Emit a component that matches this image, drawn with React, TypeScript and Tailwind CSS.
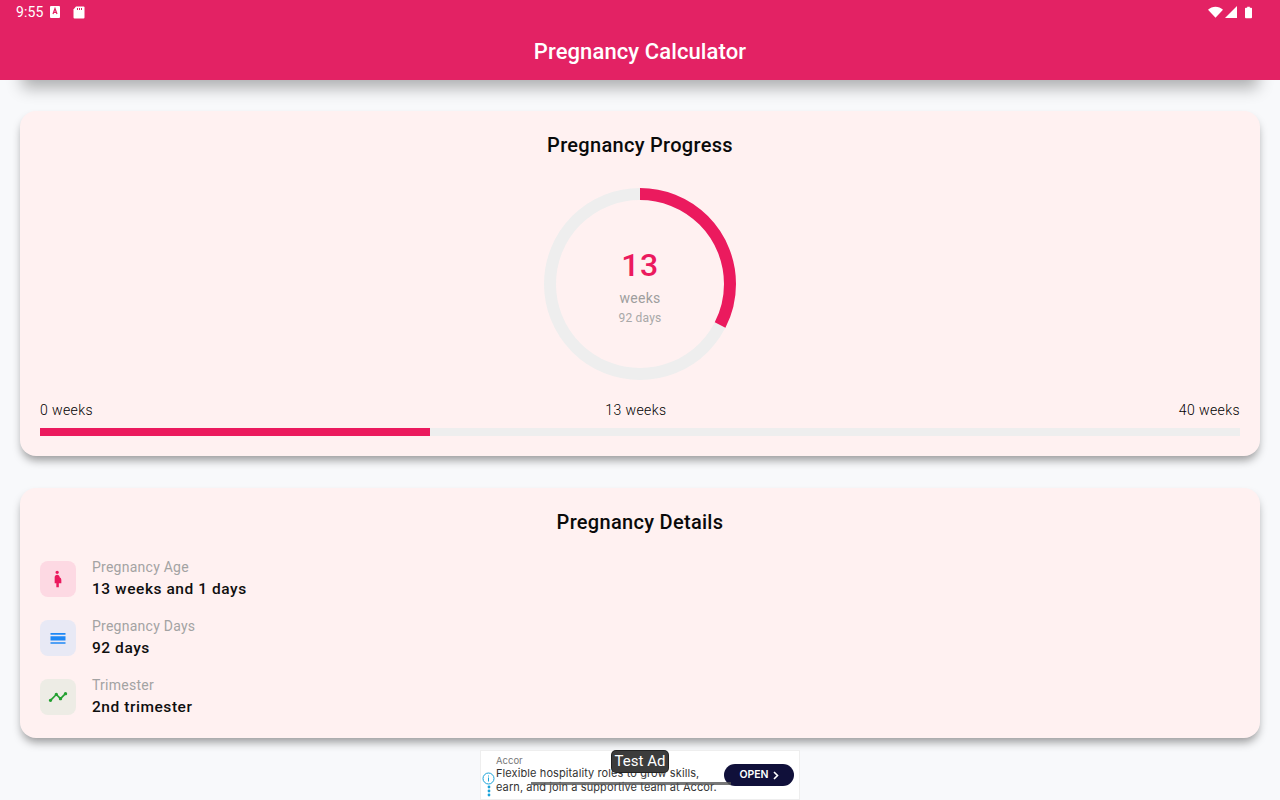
import React from "react";
import { MdPregnantWoman, MdCalendarViewDay, MdTimeline } from "react-icons/md";

function StatusBar() {
  return (
    <div className="flex h-6 items-center justify-between pl-4 pr-[28px] text-white">
      <div className="flex items-center">
        <span className="text-[14px] leading-6 tracking-[0.1px]">9:55</span>
        <svg width="10" height="12" viewBox="0 0 10 12" className="ml-[7px]">
          <rect x="0" y="0" width="10" height="12" rx="1" fill="#fff" />
          <path d="M3 8 L5 2.5 L7 8 M3.8 6.3 H6.2" stroke="#e32264" strokeWidth="1.2" fill="none" />
        </svg>
        <svg width="12" height="13" viewBox="0 0 12 13" className="ml-[13px]">
          <path d="M3 0.5 H10.5 A1 1 0 0 1 11.5 1.5 V11.5 A1 1 0 0 1 10.5 12.5 H1.5 A1 1 0 0 1 0.5 11.5 V3.5 Z" fill="#fff" />
          <rect x="4" y="2" width="1" height="2" fill="#e32264" />
          <rect x="6" y="2" width="1" height="2" fill="#e32264" />
          <rect x="8" y="2" width="1" height="2" fill="#e32264" />
        </svg>
      </div>
      <div className="flex items-center">
        <svg width="15" height="12" viewBox="0 0 16 12">
          <path d="M0 3.5 C4.5 -0.8 11.5 -0.8 16 3.5 L8 12 Z" fill="#fff" />
        </svg>
        <svg width="12" height="12" viewBox="0 0 12 12" className="ml-[2px]">
          <path d="M12 0 V12 H0 Z" fill="#fff" />
        </svg>
        <svg width="7" height="13" viewBox="0 0 8 13" className="ml-[8px]">
          <path d="M2.5 0 H5.5 V1 H7 A1 1 0 0 1 8 2 V12 A1 1 0 0 1 7 13 H1 A1 1 0 0 1 0 12 V2 A1 1 0 0 1 1 1 H2.5 Z" fill="#fff" />
        </svg>
      </div>
    </div>
  );
}

function Ring() {
  const r = 90;
  const c = 2 * Math.PI * r;
  return (
    <div className="relative mx-auto mt-[29px] h-[192px] w-[192px]">
      <svg width="192" height="192" viewBox="0 0 192 192" className="absolute inset-0">
        <circle cx="96" cy="96" r={r} fill="none" stroke="#eeeeee" strokeWidth="12" />
        <circle
          cx="96"
          cy="96"
          r={r}
          fill="none"
          stroke="#eb1a5e"
          strokeWidth="12"
          strokeDasharray={`${c * 0.325} ${c}`}
          transform="rotate(-90 96 96)"
        />
      </svg>
      <div className="relative flex h-full flex-col items-center pt-[55px]">
        <span className="text-[32px] font-medium leading-[44px] tracking-[0.5px] text-[#eb1a5e]">13</span>
        <span className="mt-[1px] text-[14px] leading-5 tracking-[0.25px] text-[#9e9e9e]">weeks</span>
        <span className="mt-[2px] text-[12px] leading-4 tracking-[0.2px] text-[#a8a8a8]">92 days</span>
      </div>
    </div>
  );
}

function Detail({ bg, icon, label, value }: { bg: string; icon: React.ReactNode; label: string; value: string }) {
  return (
    <div className="flex items-center">
      <div className={`flex h-9 w-9 items-center justify-center rounded-lg ${bg}`}>{icon}</div>
      <div className="ml-4 flex flex-col">
        <span className="text-[14px] leading-[20px] tracking-[0.25px] text-[#a3a3a3]">{label}</span>
        <span className="mt-[1px] text-[15.5px] font-medium leading-[22px] tracking-[0.55px] text-[#0f0f0f]">{value}</span>
      </div>
    </div>
  );
}

export default function App() {
  return (
    <div className="flex h-[800px] flex-col overflow-hidden bg-[#f8f9fb] font-['Roboto',sans-serif]">
      <header className="relative z-10 h-20 bg-[#e32264] shadow-[0_30px_16px_-22px_rgba(0,0,0,0.3)]">
        <StatusBar />
        <h1 className="mt-[13px] text-center text-[22px] font-medium leading-[30px] tracking-[0.1px] text-white">Pregnancy Calculator</h1>
      </header>
      <main className="flex flex-col gap-8 px-5 pt-[31px]">
        <section className="h-[345px] rounded-2xl bg-[#fff1f1] p-5 shadow-[0_6px_10px_-2px_rgba(0,0,0,0.4)]">
          <h2 className="text-center text-[20px] font-medium leading-7 tracking-[0.3px] text-[#0a0a0a]">Pregnancy Progress</h2>
          <Ring />
          <div className="mt-[20px] flex justify-between text-[14px] font-light leading-5 tracking-[0.4px] text-black">
            <span>0 weeks</span>
            <span>13 weeks</span>
            <span>40 weeks</span>
          </div>
          <div className="mt-2 h-2 bg-[#eeeeee]">
            <div className="h-full w-[32.5%] bg-[#eb1a5e]" />
          </div>
        </section>
        <section className="h-[250px] rounded-2xl bg-[#fff1f1] p-5 shadow-[0_6px_10px_-2px_rgba(0,0,0,0.4)]">
          <h2 className="text-center text-[20px] font-medium leading-7 tracking-[0.3px] text-[#0a0a0a]">Pregnancy Details</h2>
          <div className="mt-[21px] flex flex-col gap-[16px]">
            <Detail bg="bg-[#fdd9e3]" icon={<MdPregnantWoman size={20} color="#eb1a5e" />} label="Pregnancy Age" value="13 weeks and 1 days" />
            <Detail bg="bg-[#e8e9f5]" icon={<MdCalendarViewDay size={20} color="#1e88f5" />} label="Pregnancy Days" value="92 days" />
            <Detail bg="bg-[#edece5]" icon={<MdTimeline size={20} color="#22a030" />} label="Trimester" value="2nd trimester" />
          </div>
        </section>
      </main>
      <div className="relative mx-auto mt-3 flex h-[50px] w-[320px] items-center border border-[#eeeeee] bg-white">
        <div className="flex h-full w-[15px] flex-col items-center justify-end pb-[2px]">
          <svg width="13" height="13" viewBox="0 0 13 13">
            <circle cx="6.5" cy="6.5" r="5.5" fill="none" stroke="#1aa3d9" strokeWidth="1" />
            <rect x="6" y="5.5" width="1" height="4" fill="#1aa3d9" />
            <rect x="6" y="3.5" width="1" height="1" fill="#1aa3d9" />
          </svg>
          <svg width="4" height="12" viewBox="0 0 4 12">
            <circle cx="2" cy="2" r="1.4" fill="#1aa3d9" />
            <circle cx="2" cy="6" r="1.4" fill="#1aa3d9" />
            <circle cx="2" cy="10" r="1.4" fill="#1aa3d9" />
          </svg>
        </div>
        <div className="flex-1 pb-[2px] font-['Inter',sans-serif] text-[#333333]">
          <div className="text-[9.5px] leading-[11px] text-[#777777]">Accor</div>
          <div className="text-[11px] leading-[14px] tracking-[0.1px]">Flexible hospitality roles to grow skills,</div>
          <div className="text-[11px] leading-[14px] tracking-[0.1px]">earn, and join a supportive team at Accor.</div>
        </div>
        <div className="mr-[5px] flex h-[22px] w-[70px] items-center justify-center gap-1 rounded-full bg-[#10103a] font-['Inter',sans-serif] text-[10.5px] font-semibold text-white">
          OPEN
          <svg width="6" height="9" viewBox="0 0 6 9">
            <path d="M1 1 L4.5 4.5 L1 8" stroke="#fff" strokeWidth="1.6" fill="none" />
          </svg>
        </div>
        <div className="absolute left-[50px] top-[31px] h-[3px] w-[200px] bg-[#555555]/80" />
        <div className="absolute left-[131px] top-0 flex h-[21px] w-[56px] items-center justify-center rounded bg-[#3c3c3c] text-[15px] text-white shadow-[0_0_0_1px_#222]">
          Test Ad
        </div>
      </div>
    </div>
  );
}
